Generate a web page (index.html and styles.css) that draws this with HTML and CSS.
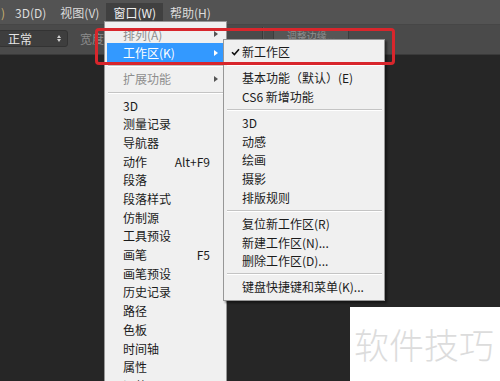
FILE: index.html
```html
<!DOCTYPE html>
<html lang="zh">
<head>
<meta charset="utf-8">
<link rel="stylesheet" href="styles.css">
</head>
<body>
<div class="app">
  <div class="menubar">
    <span class="mb-item mb-cut">)</span>
    <span class="mb-item">3D(D)</span>
    <span class="mb-item">视图(V)</span>
    <span class="mb-item mb-active">窗口(W)</span>
    <span class="mb-item">帮助(H)</span>
  </div>
  <div class="optbar">
    <div class="select"><span>正常</span><span class="updown"><i class="up"></i><i class="down"></i></span></div>
    <span class="opt-label">宽度</span>
    <span class="opt-spacer"></span>
    <span class="opt-sep"></span>
    <span class="opt-btn">调整边缘...</span>
  </div>
  <div class="canvas"></div>

  <div class="menu main-menu">
    <div class="item disabled"><span class="label">排列(A)</span><i class="arrow"></i></div>
    <div class="item hover"><span class="label">工作区(K)</span><i class="arrow"></i></div>
    <div class="sep"></div>
    <div class="item disabled"><span class="label">扩展功能</span><i class="arrow"></i></div>
    <div class="sep"></div>
    <div class="item"><span class="label">3D</span></div>
    <div class="item"><span class="label">测量记录</span></div>
    <div class="item"><span class="label">导航器</span></div>
    <div class="item"><span class="label">动作</span><span class="key">Alt+F9</span></div>
    <div class="item"><span class="label">段落</span></div>
    <div class="item"><span class="label">段落样式</span></div>
    <div class="item"><span class="label">仿制源</span></div>
    <div class="item"><span class="label">工具预设</span></div>
    <div class="item"><span class="label">画笔</span><span class="key">F5</span></div>
    <div class="item"><span class="label">画笔预设</span></div>
    <div class="item"><span class="label">历史记录</span></div>
    <div class="item"><span class="label">路径</span></div>
    <div class="item"><span class="label">色板</span></div>
    <div class="item"><span class="label">时间轴</span></div>
    <div class="item"><span class="label">属性</span></div>
    <div class="item"><span class="label">调整</span></div>
  </div>

  <div class="menu sub-menu">
    <div class="item"><svg class="check" width="9" height="8" viewBox="0 0 9 8"><path d="M1 4.2 L3.4 6.6 L8 1.2" fill="none" stroke="#111" stroke-width="1.6"/></svg><span class="label">新工作区</span></div>
    <div class="sep"></div>
    <div class="item"><span class="label">基本功能（默认）(E)</span></div>
    <div class="item"><span class="label">CS6 新增功能</span></div>
    <div class="sep"></div>
    <div class="item"><span class="label">3D</span></div>
    <div class="item"><span class="label">动感</span></div>
    <div class="item"><span class="label">绘画</span></div>
    <div class="item"><span class="label">摄影</span></div>
    <div class="item"><span class="label">排版规则</span></div>
    <div class="sep"></div>
    <div class="item"><span class="label">复位新工作区(R)</span></div>
    <div class="item"><span class="label">新建工作区(N)...</span></div>
    <div class="item"><span class="label">删除工作区(D)...</span></div>
    <div class="sep"></div>
    <div class="item"><span class="label">键盘快捷键和菜单(K)...</span></div>
  </div>

  <div class="highlight-box"></div>

  <div class="watermark">软件技巧</div>
</div>
</body>
</html>
```

FILE: styles.css
```css
* { box-sizing: border-box; }
html, body {
  margin: 0;
  padding: 0;
  width: 500px;
  height: 381px;
  overflow: hidden;
  background: #262626;
  font-family: "Noto Sans CJK SC", "Microsoft YaHei", sans-serif;
}
.app {
  position: relative;
  width: 500px;
  height: 381px;
  display: flex;
  flex-direction: column;
}
.menubar {
  height: 25px;
  background: #535353;
  display: flex;
  align-items: center;
  font-size: 12px;
  color: #dcdcdc;
  border-bottom: 1px solid #464646;
}
.mb-item {
  height: 19px;
  line-height: 19px;
  padding: 0 7px;
}
.mb-cut {
  margin-left: -6px;
  margin-right: -4px;
  color: #c8b070;
}
.mb-active {
  background: #404040;
  color: #f0f0f0;
}
.optbar {
  height: 30px;
  background: #4a4a4a;
  display: flex;
  align-items: center;
  font-size: 12px;
  border-bottom: 1px solid #3a3a3a;
}
.select {
  width: 70px;
  height: 17px;
  margin-top: -2px;
  margin-left: -2px;
  background: #3e3e3e;
  border: 1px solid #333;
  border-radius: 3px;
  display: flex;
  align-items: center;
  justify-content: space-between;
  padding: 0 6px 0 9px;
  color: #e6e6e6;
  font-size: 12px;
}
.updown {
  display: flex;
  flex-direction: column;
  gap: 1px;
}
.updown i {
  width: 0; height: 0;
  border-left: 2.5px solid transparent;
  border-right: 2.5px solid transparent;
}
.updown .up { border-bottom: 3px solid #cfcfcf; }
.updown .down { border-top: 3px solid #cfcfcf; }
.opt-label {
  margin-left: 12px;
  margin-top: -2px;
  color: #8c8c8c;
}
.opt-spacer { flex: 1 0 0; max-width: 158px; }
.opt-sep {
  width: 1px;
  height: 26px;
  background: #3a3a3a;
  box-shadow: 1px 0 0 #585858;
  margin-right: 10px;
}
.opt-btn {
  width: 76px;
  height: 15px;
  margin-top: -8px;
  background: #565656;
  border: 1px solid #3c3c3c;
  border-radius: 2px;
  color: #8f8f8f;
  font-size: 10px;
  line-height: 13px;
  text-align: center;
}
.canvas { flex: 1; background: #262626; }

.menu {
  position: absolute;
  background: #f0f0f0;
  border: 1px solid #979797;
  padding: 2px;
  font-size: 12px;
  color: #1b1b1b;
}
.main-menu {
  left: 104px;
  top: 21px;
  width: 123px;
  height: 380px;
  padding-top: 2.7px;
}
.sub-menu {
  left: 223px;
  top: 39px;
  width: 162px;
  height: 262px;
  box-shadow: 2px 2px 2px rgba(0,0,0,0.45);
}
.item {
  position: relative;
  height: 18.7px;
  display: flex;
  align-items: center;
  padding-left: 16px;
  padding-right: 6px;
  white-space: nowrap;
}
.item .label { flex: 1; }
.item .key { padding-right: 8px; }
.item.disabled { color: #8e8e8e; }
.item.hover {
  background: #3399ff;
  color: #fff;
}
.arrow {
  width: 0; height: 0;
  border-top: 3.5px solid transparent;
  border-bottom: 3.5px solid transparent;
  border-left: 4px solid #444;
}
.item.disabled .arrow { border-left-color: #555; }
.item.hover .arrow { border-left-color: #fff; }
.check {
  position: absolute;
  left: 5px;
  top: 6px;
}
.sep {
  height: 7.5px;
  display: flex;
  align-items: center;
  margin: 0 0 0 1px;
}
.sep::before {
  content: "";
  flex: 1;
  height: 1px;
  background: #c4c4c4;
  box-shadow: 0 1px 0 #fff;
}
.highlight-box {
  position: absolute;
  left: 95px;
  top: 28px;
  width: 300px;
  height: 37px;
  border: 3px solid #d8262c;
  border-radius: 4px;
}
.watermark {
  position: absolute;
  left: 350px;
  top: 307px;
  width: 150px;
  height: 74px;
  background: #fff;
  color: #dcdcdc;
  font-size: 35px;
  font-weight: 300;
  line-height: 74px;
  padding-left: 4px;
  white-space: nowrap;
  overflow: hidden;
}
```
